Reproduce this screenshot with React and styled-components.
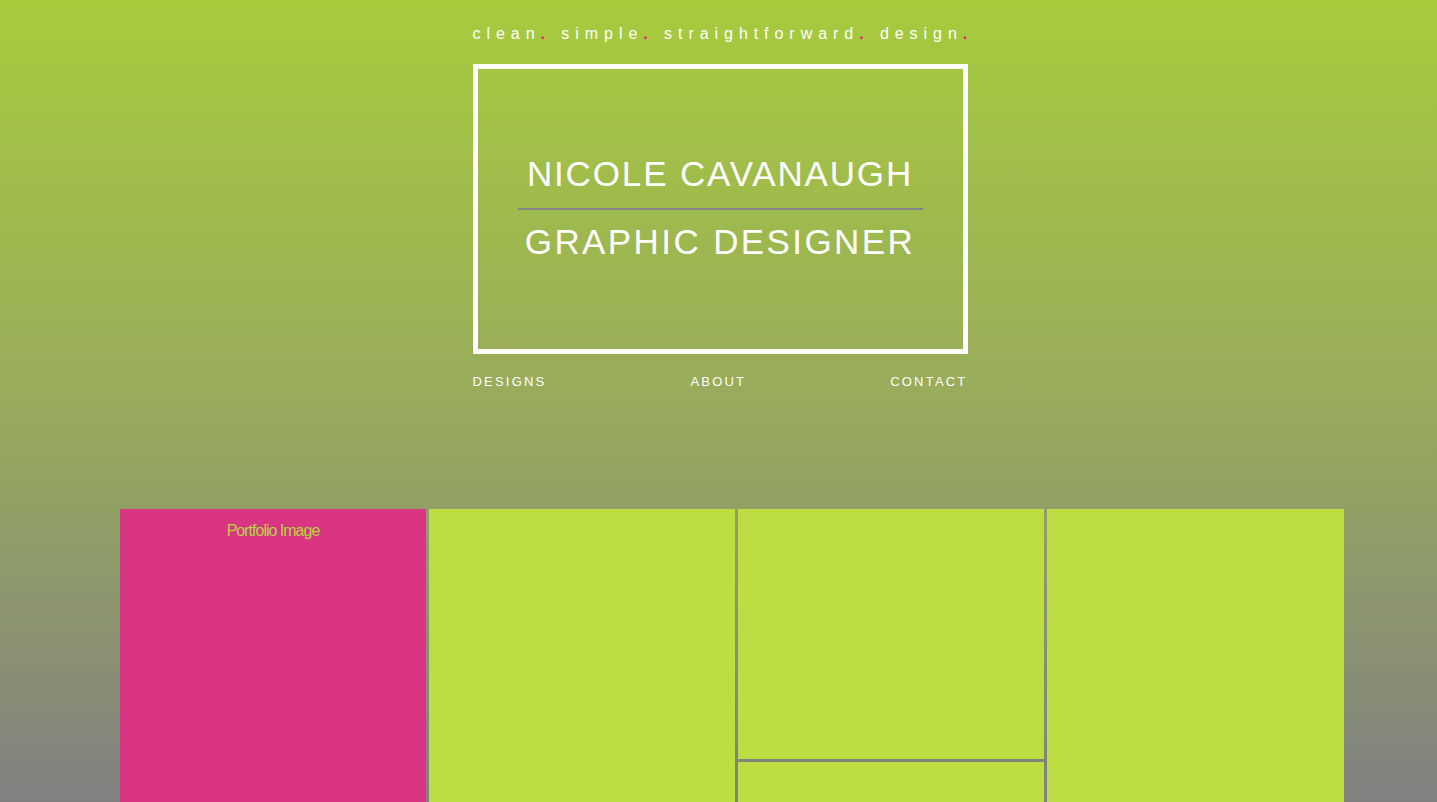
import React from "react";
import styled, { createGlobalStyle } from "styled-components";

const Global = createGlobalStyle`
  html, body { margin: 0; padding: 0; }
  html {
    background: linear-gradient(to bottom, #a6cb3c 0px, #98ab5c 400px, #808080 802px) fixed;
    min-height: 100%;
  }
  body {
    font-family: "Liberation Sans", Arial, sans-serif;
    color: #fff;
  }
`;

const Page = styled.div`
  display: flex;
  flex-direction: column;
  align-items: center;
  padding-top: 25px;
`;

const Header = styled.header`
  width: 495px;
  margin-left: 3px;
  display: flex;
  flex-direction: column;
`;

const Tagline = styled.div`
  font-size: 16px;
  line-height: 18px;
  letter-spacing: 5.95px;
  white-space: nowrap;
  color: #fff;
`;

const Dot = styled.span`
  color: #ec1a7c;
  font-weight: 700;
`;

const Frame = styled.div`
  box-sizing: border-box;
  margin-top: 21px;
  height: 290px;
  border: 5px solid #fff;
  display: flex;
  flex-direction: column;
  align-items: center;
  justify-content: center;
  padding-bottom: 2px;
`;

const Title = styled.h1`
  margin: 0;
  font-weight: 400;
  font-size: 35px;
  line-height: 40px;
  letter-spacing: ${(p) => p.$spacing}px;
  white-space: nowrap;
`;

const Rule = styled.div`
  width: 405px;
  height: 2px;
  background: #85858a;
  margin: 14px 0 12px;
`;

const Nav = styled.nav`
  margin-top: 20px;
  display: flex;
  justify-content: space-between;
`;

const NavLink = styled.a`
  font-size: 13px;
  letter-spacing: 2.2px;
  color: #fff;
  text-decoration: none;
`;

const Grid = styled.section`
  align-self: stretch;
  margin-top: 120px;
  padding-left: 120px;
  display: grid;
  grid-template-columns: 306px 306px 306px 297px;
  gap: 3px;
`;

const Tile = styled.div`
  background: ${(p) => (p.$pink ? "#d93583" : "#bcde42")};
  height: ${(p) => p.$h}px;
  display: flex;
  justify-content: center;
`;

const Stack = styled.div`
  display: flex;
  flex-direction: column;
  gap: 3px;
`;

const Caption = styled.span`
  margin-top: 13px;
  font-size: 16px;
  letter-spacing: -1px;
  color: #b9d340;
`;

export default function App() {
  return (
    <>
      <Global />
      <Page>
        <Header>
          <Tagline>
            clean<Dot>.</Dot> simple<Dot>.</Dot> straightforward<Dot>.</Dot> design<Dot>.</Dot>
          </Tagline>
          <Frame>
            <Title $spacing={1.85}>NICOLE CAVANAUGH</Title>
            <Rule />
            <Title $spacing={2.4}>GRAPHIC DESIGNER</Title>
          </Frame>
          <Nav>
            <NavLink href="#">DESIGNS</NavLink>
            <NavLink href="#">ABOUT</NavLink>
            <NavLink href="#">CONTACT</NavLink>
          </Nav>
        </Header>
        <Grid>
          <Tile $pink $h={500}>
            <Caption>Portfolio Image</Caption>
          </Tile>
          <Tile $h={500} />
          <Stack>
            <Tile $h={250} />
            <Tile $h={247} />
          </Stack>
          <Tile $h={500} />
        </Grid>
      </Page>
    </>
  );
}
